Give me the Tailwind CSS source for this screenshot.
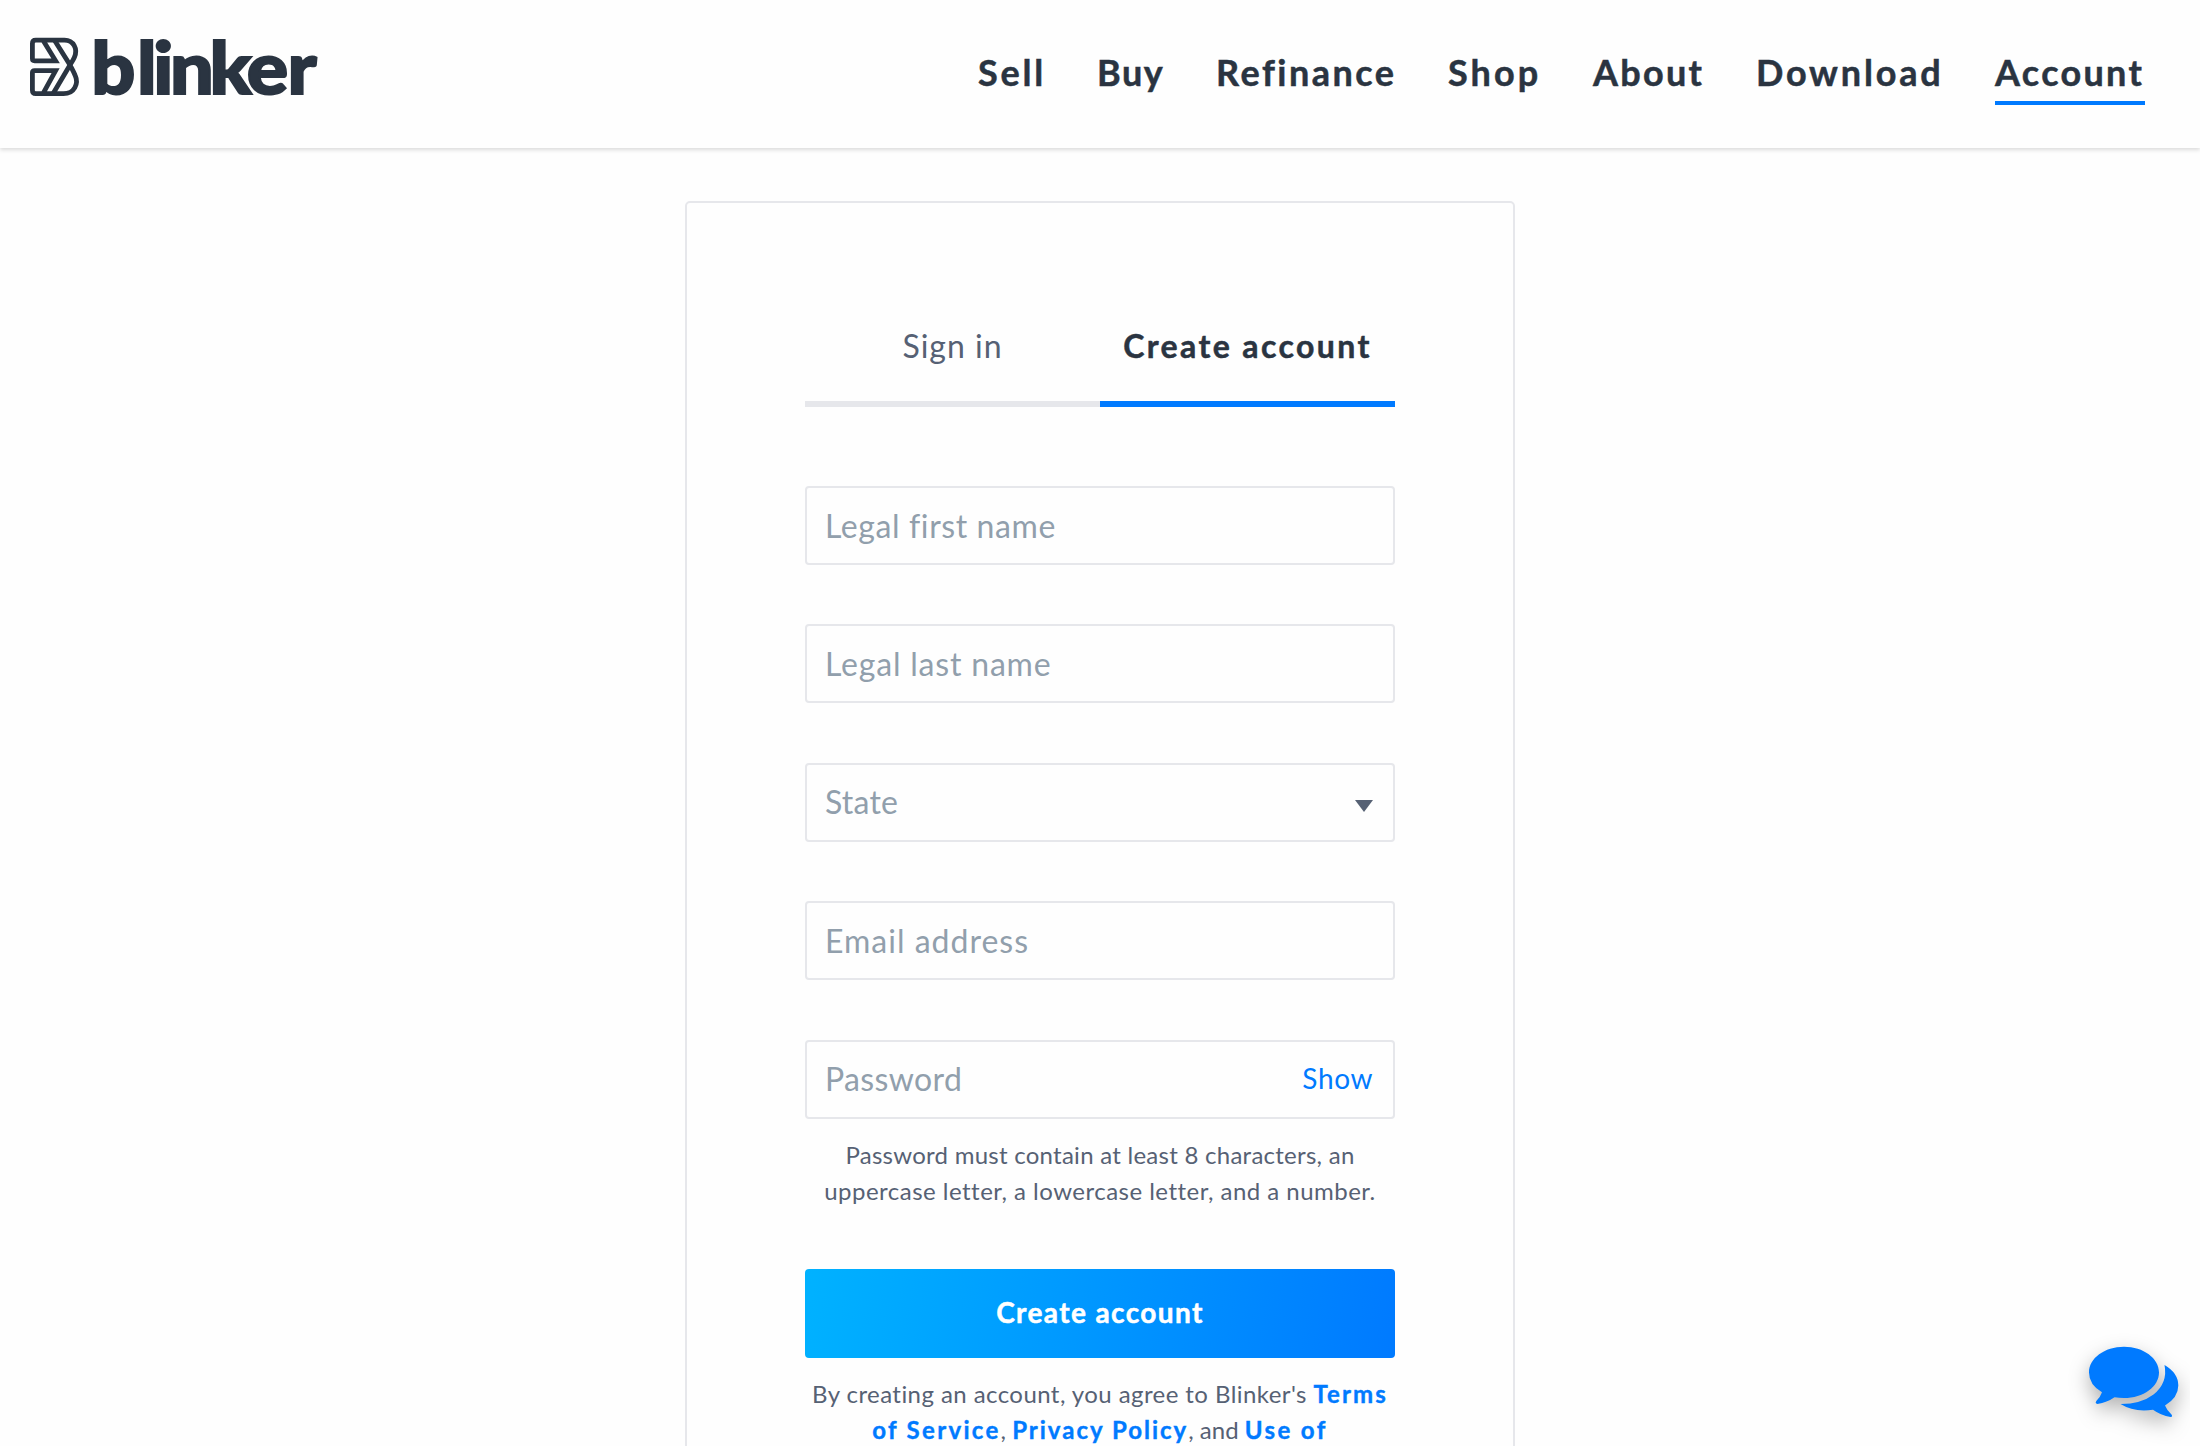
<!DOCTYPE html>
<html lang="en">
<head>
<meta charset="utf-8">
<title>Blinker - Create account</title>
<script src="https://cdn.jsdelivr.net/npm/@tailwindcss/browser@4"></script>
</head>
<body class="h-screen overflow-hidden bg-[#fefefe] font-['Lato',sans-serif] text-[#566174]">
<div class="flex h-full flex-col">
  <header class="flex h-[148px] shrink-0 items-start justify-between bg-[#fefefe] pr-[55px] pl-[28px] text-[#2a3441] shadow-[0_2px_4px_rgba(0,0,0,0.14)]">
    <a class="mt-[20px] block" aria-label="Blinker">
      <svg class="block" width="294" height="100" viewBox="28 20 294 100">
        <g fill="none" stroke="#2a3441" stroke-width="4.8">
          <path d="M43 40.2 55.6 60.8H34.6Q32.4 60.8 32.4 58.6V43.6Q32.4 40.2 35.8 40.2H64.5C73.500 40.200 78.200 49 74.300 57.500C73 60.500 71.500 62.500 70 65L53 93.700"/>
          <path d="M43 93.700 55.600 70.600H34.600Q32.400 70.600 32.400 72.800V90.300Q32.400 93.700 35.800 93.700H63.500C74.500 93.700 78.800 83.500 75.200 75.500C73.800 72 71.500 68 70 65L54.500 40.200"/>
        </g>
        <g transform="scale(1.06 1)">
          <text x="86 129.300 144.600 160.300 197.600 232.700 271.300" y="93.700" font-family="Lato" font-weight="900" font-size="73" fill="#2a3441" stroke="#2a3441" stroke-width="1.900">blinker</text>
        </g>
      </svg>
    </a>
    <nav class="mt-[50px] flex gap-[52px] text-[36px] leading-[44px] font-bold whitespace-nowrap [-webkit-text-stroke:0.5px]">
      <a class="w-[68px] pl-px tracking-[2.8px]">Sell</a>
      <a class="w-[67px] tracking-[1.5px]">Buy</a>
      <a class="w-[179px] tracking-[2.5px]">Refinance</a>
      <a class="w-[94px] pl-px tracking-[3.1px]">Shop</a>
      <a class="w-[112px] tracking-[2.3px]">About</a>
      <a class="-ml-px w-[187px] tracking-[2.8px]">Download</a>
      <a class="w-[150px] border-b-4 border-[#007aff] pb-[7px] tracking-[2.3px]">Account</a>
    </nav>
  </header>

  <main class="flex flex-1 items-start justify-center pt-[53px]">
    <section class="h-[1300px] w-[830px] shrink-0 rounded-[5px] border-2 border-[#e6e7eb] px-[118px] pt-[123px]">
      <div class="grid grid-cols-2 text-center text-[32px] leading-[40px]">
        <a class="h-[81px] border-b-6 border-[#e6e7eb] tracking-[1px]">Sign in</a>
        <a class="h-[81px] border-b-6 border-[#007aff] font-bold tracking-[2.4px] text-[#2a3441] [-webkit-text-stroke:0.5px]">Create account</a>
      </div>

      <form class="mt-[79px]">
        <div class="flex flex-col gap-[59.400px] text-[32px] leading-[40px] text-[#919fac]">
          <div class="flex h-[79px] items-center rounded-[4px] border-2 border-[#e6e7eb] px-[18px] tracking-[0.600px]">Legal first name</div>
          <div class="flex h-[79px] items-center rounded-[4px] border-2 border-[#e6e7eb] px-[18px] tracking-[0.800px]">Legal last name</div>
          <div class="flex h-[79px] items-center justify-between rounded-[4px] border-2 border-[#e6e7eb] pr-5 pl-[18px] tracking-[0.200px]">State
            <svg class="mt-2" width="18" height="12" viewBox="0 0 18 12"><path d="M0 0H18L9 12Z" fill="#566174"/></svg>
          </div>
          <div class="flex h-[79px] items-center rounded-[4px] border-2 border-[#e6e7eb] px-[18px] tracking-[1px]">Email address</div>
          <div class="flex h-[79px] items-center justify-between rounded-[4px] border-2 border-[#e6e7eb] pr-5 pl-[18px] tracking-[0.370px]">Password
            <span class="pb-0.5 text-[28px] tracking-[0.600px] text-[#007aff]">Show</span>
          </div>
        </div>
        <p class="mt-[18px] text-center text-[24px] leading-[36px] whitespace-nowrap"><span class="tracking-[0.260px]">Password must contain at least 8 characters, an</span><br><span class="tracking-[0.480px]">uppercase letter, a lowercase letter, and a number.</span></p>
        <button type="button" class="mt-[60px] flex h-[89px] w-full items-center justify-center rounded-[4px] bg-[linear-gradient(100deg,#00b2ff,#007aff)] pb-[3px] text-[28px] leading-[40px] font-bold tracking-[1.4px] text-white [-webkit-text-stroke:0.5px]">Create account</button>
        <p class="mt-[18px] text-center text-[24px] leading-[36px] whitespace-nowrap"><span class="tracking-[0.430px]">By creating an account, you agree to Blinker's </span><a class="font-bold tracking-[2.1px] text-[#007aff] [-webkit-text-stroke:0.4px]">Terms</a><br><a class="font-bold tracking-[2.300px] text-[#007aff] [-webkit-text-stroke:0.4px]">of Service</a>, <a class="font-bold tracking-[2px] text-[#007aff] [-webkit-text-stroke:0.4px]">Privacy Policy</a>, and <a class="font-bold tracking-[2.4px] text-[#007aff] [-webkit-text-stroke:0.4px]">Use of</a></p>
      </form>
    </section>
  </main>
</div>

<button type="button" class="fixed right-[10px] bottom-0 block" aria-label="Open chat">
  <svg class="block" width="130" height="126" viewBox="2060 1320 130 126">
    <g fill="#007aff" class="drop-shadow-[0_8px_10px_rgba(0,0,0,0.3)]">
      <path d="M2124 1346.700C2143.500 1346.700 2159 1358.300 2159 1372.400C2159 1386.500 2143.500 1398 2124 1398Q2119 1398 2114.500 1397.200Q2107 1402.500 2097.500 1404Q2094.500 1403.500 2096.500 1400.800Q2100.500 1396.500 2102 1392.200Q2089 1384.500 2089 1372.400C2089 1358.300 2104.500 1346.700 2124 1346.700Z"/>
      <path d="M2164.500 1365Q2178.300 1373 2178.300 1385.500Q2178.300 1397.500 2165 1405.500Q2167 1410.500 2171.500 1414.500Q2173 1417 2170.500 1417Q2161 1415.500 2153 1409.700Q2134 1412.500 2120.500 1404Q2141 1404 2153.500 1394.500Q2168 1383 2164.500 1365Z"/>
    </g>
  </svg>
</button>
</body>
</html>
